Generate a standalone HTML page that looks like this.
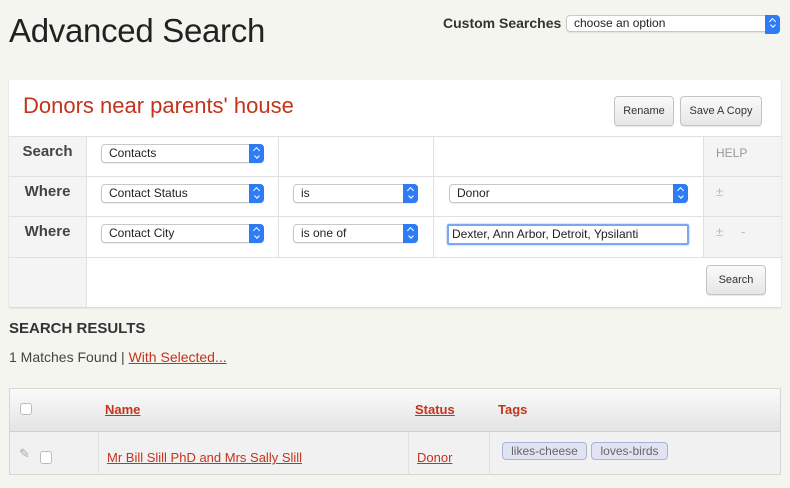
<!DOCTYPE html>
<html><head><style>
*{box-sizing:border-box;margin:0;padding:0}
body{width:790px;height:488px;background:#f5f5f0;font-family:"Liberation Sans",sans-serif;color:#333;position:relative;overflow:hidden}
.a{position:absolute}
.sel{position:absolute;height:19px;background:#fff;border:1px solid #c8c8c8;border-radius:4px;font-size:12px;line-height:17px;padding-left:7px;color:#222;box-shadow:0 1px 1px rgba(0,0,0,.08)}
.sel:after{content:"";position:absolute;right:-1px;top:-1px;width:15px;height:19px;background:#2d7cf6;border-radius:0 4px 4px 0}
.sel:before{content:"";position:absolute;right:4px;top:3px;width:4px;height:4px;border-left:1.5px solid #fff;border-top:1.5px solid #fff;transform:rotate(45deg);z-index:2}
.sel i{position:absolute;right:4px;bottom:4px;width:4px;height:4px;border-right:1.5px solid #fff;border-bottom:1.5px solid #fff;transform:rotate(45deg);z-index:2}
.btn{position:absolute;background:linear-gradient(#fafafa,#e6e6e6);border:1px solid #c4c4c4;border-radius:4px;font-size:11px;text-align:center;color:#333;box-shadow:0 1px 1px rgba(0,0,0,.1)}
.lab{position:absolute;left:9px;width:77px;text-align:center;font-weight:bold;font-size:15px;color:#444}
.hl{position:absolute;background:#e0e0e0}
a{color:#c4331b;text-decoration:underline}
</style></head><body>
<div class="a" style="left:9px;top:12px;font-size:33px;color:#222;letter-spacing:-0.3px">Advanced Search</div>
<div class="a" style="left:443px;top:15px;font-size:14px;font-weight:bold;color:#333">Custom Searches</div>
<div class="sel" style="left:566px;top:15px;width:214px;height:17px;line-height:15px">choose an option<i></i></div>

<div class="a" style="left:9px;top:80px;width:772px;height:227px;background:#fff;box-shadow:0 1px 2px rgba(0,0,0,.15)"></div>
<div class="a" style="left:23px;top:93px;font-size:22px;color:#c4331b">Donors near parents' house</div>
<div class="btn" style="left:614px;top:96px;width:60px;height:30px;line-height:28px">Rename</div>
<div class="btn" style="left:680px;top:96px;width:82px;height:30px;line-height:28px">Save A Copy</div>

<div class="a" style="left:9px;top:136px;width:77px;height:171px;background:#f4f4f4"></div>
<div class="a" style="left:703px;top:136px;width:78px;height:121px;background:#f4f4f4"></div>
<div class="hl" style="left:9px;top:136px;width:772px;height:1px"></div>
<div class="hl" style="left:9px;top:176px;width:772px;height:1px"></div>
<div class="hl" style="left:9px;top:216px;width:772px;height:1px"></div>
<div class="hl" style="left:9px;top:257px;width:772px;height:1px"></div>
<div class="hl" style="left:86px;top:136px;width:1px;height:171px"></div>
<div class="hl" style="left:278px;top:136px;width:1px;height:121px"></div>
<div class="hl" style="left:433px;top:136px;width:1px;height:121px"></div>
<div class="hl" style="left:703px;top:136px;width:1px;height:121px"></div>

<div class="lab" style="top:143px">Search</div>
<div class="lab" style="top:183px">Where</div>
<div class="lab" style="top:223px">Where</div>
<div class="sel" style="left:101px;top:144px;width:163px">Contacts<i></i></div>
<div class="sel" style="left:101px;top:184px;width:163px">Contact Status<i></i></div>
<div class="sel" style="left:101px;top:224px;width:163px">Contact City<i></i></div>
<div class="sel" style="left:293px;top:184px;width:125px">is<i></i></div>
<div class="sel" style="left:293px;top:224px;width:125px">is one of<i></i></div>
<div class="sel" style="left:449px;top:184px;width:239px">Donor<i></i></div>
<div class="a" style="left:447px;top:224px;width:242px;height:21px;border:2px solid #7aa7ef;border-radius:2px;background:#fff;font-size:12px;line-height:17px;padding-left:3px;color:#222;box-shadow:0 0 2px #9bbcf5">Dexter, Ann Arbor, Detroit, Ypsilanti</div>
<div class="a" style="left:716px;top:146px;font-size:12px;color:#999">HELP</div>
<div class="a" style="left:716px;top:184px;font-size:13px;color:#bbb">±</div>
<div class="a" style="left:716px;top:224px;font-size:13px;color:#bbb">±</div>
<div class="a" style="left:741px;top:224px;font-size:13px;color:#bbb">-</div>
<div class="btn" style="left:706px;top:265px;width:60px;height:30px;line-height:28px">Search</div>

<div class="a" style="left:9px;top:320px;font-size:15px;font-weight:bold;color:#333">SEARCH RESULTS</div>
<div class="a" style="left:9px;top:349px;font-size:14px;color:#444">1 Matches Found | <a>With Selected...</a></div>

<div class="a" style="left:9px;top:388px;width:772px;height:87px;border:1px solid #d6d6d6;background:#f1f1f1"></div>
<div class="a" style="left:10px;top:389px;width:770px;height:43px;background:linear-gradient(#fafafa,#e4e4e4);border-bottom:1px solid #cfcfcf"></div>
<div class="hl" style="left:98px;top:432px;width:1px;height:43px"></div>
<div class="hl" style="left:408px;top:432px;width:1px;height:43px"></div>
<div class="hl" style="left:489px;top:432px;width:1px;height:43px"></div>
<div class="a" style="left:20px;top:403px;width:12px;height:12px;border:1px solid #bbb;border-radius:3px;background:#fff"></div>
<div class="a" style="left:105px;top:402px;font-size:13px;font-weight:bold"><a>Name</a></div>
<div class="a" style="left:415px;top:402px;font-size:13px;font-weight:bold"><a>Status</a></div>
<div class="a" style="left:498px;top:402px;font-size:13px;font-weight:bold;color:#c4331b">Tags</div>
<div class="a" style="left:19px;top:446px;font-size:13px;color:#aaa">✎</div>
<div class="a" style="left:40px;top:451px;width:12px;height:13px;border:1px solid #bbb;border-radius:3px;background:#fff"></div>
<div class="a" style="left:107px;top:450px;font-size:13px"><a>Mr Bill Slill PhD and Mrs Sally Slill</a></div>
<div class="a" style="left:417px;top:450px;font-size:13px"><a>Donor</a></div>
<div class="a" style="left:502px;top:442px;width:85px;height:18px;border:1px solid #a9b3d6;border-radius:4px;background:#dfe3f2;font-size:12px;line-height:16px;text-align:center;color:#666">likes-cheese</div>
<div class="a" style="left:591px;top:442px;width:77px;height:18px;border:1px solid #a9b3d6;border-radius:4px;background:#dfe3f2;font-size:12px;line-height:16px;text-align:center;color:#666">loves-birds</div>
</body></html>
